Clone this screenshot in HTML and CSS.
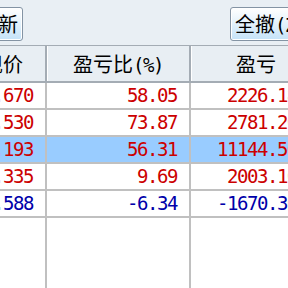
FILE: index.html
```html
<!DOCTYPE html>
<html lang="zh-CN">
<head>
    <meta charset="UTF-8">
    <title>持仓</title>
    <link rel="stylesheet" href="styles.css">
</head>
<body>

    <div class="toolbar">
        <button class="tool-btn btn-refresh">刷新</button>
        <button class="tool-btn btn-cancel">全撤<span class="half">(Z)</span></button>
    </div>

    <div class="grid-head">
        <div class="head-cell">现价</div>
        <div class="head-cell">盈亏比<span class="half">(%)</span></div>
        <div class="head-cell">盈亏</div>
    </div>

    <div class="grid-body">
        <div class="cell up">12.670</div>
        <div class="cell up">58.05</div>
        <div class="cell up last">2226.18</div>

        <div class="cell up">10.530</div>
        <div class="cell up">73.87</div>
        <div class="cell up last">2781.20</div>

        <div class="cell up selected">25.193</div>
        <div class="cell up selected">56.31</div>
        <div class="cell up selected last">11144.56</div>

        <div class="cell up">12.335</div>
        <div class="cell up">9.69</div>
        <div class="cell up last">2003.10</div>

        <div class="cell down">12.588</div>
        <div class="cell down">-6.34</div>
        <div class="cell down last">-1670.30</div>

        <!-- empty space under the last position -->
        <div class="filler"></div>
        <div class="filler"></div>
        <div class="filler"></div>
    </div>

</body>
</html>
```

FILE: styles.css
```css
body {
    margin: 0;
    padding: 0;
    width: 288px;
    height: 288px;
    overflow: hidden;
    background-color: #ffffff;
    font-family: "Noto Sans CJK SC", sans-serif;
}

.half {
    font-family: "DejaVu Sans Mono", monospace;
    font-size: 19px;
    letter-spacing: -1.44px;
}

/* Toolbar with the action buttons */
.toolbar {
    height: 45px;
    background-color: #e9eff4;
    display: flex;
    justify-content: space-between;
    align-items: flex-start;
    padding-top: 7px;
    box-sizing: border-box;
}

.tool-btn {
    height: 34px;
    padding: 0 4px;
    border: 1px solid #8494a4;
    border-radius: 3px;
    box-shadow: inset 0 0 0 1px #ffffff;
    background: linear-gradient(to bottom, #ffffff 0%, #e6f3fc 45%, #c4e2f8 100%);
    font-family: "Noto Sans CJK SC", sans-serif;
    font-size: 20px;
    line-height: 30px;
    color: #000000;
    white-space: nowrap;
}

.btn-refresh {
    margin-left: -27px;
}

.btn-cancel {
    margin-right: -22px;
}

/* Column headers */
.grid-head {
    display: grid;
    grid-template-columns: 84px 142px 130px;
    column-gap: 2px;
    margin-left: -39px;
    width: 360px;
    background-color: #a4acb4;
    border-top: 1px solid #a4acb4;
    border-bottom: 2px solid #a4acb4;
}

.head-cell {
    height: 35px;
    background-color: #e8eef3;
    box-shadow: inset 1px 0 0 #ffffff;
    font-size: 20px;
    line-height: 35px;
    text-align: center;
    white-space: nowrap;
    color: #000000;
}

/* Rows */
.grid-body {
    display: grid;
    grid-template-columns: 84px 142px 130px;
    grid-template-rows: repeat(5, 25px) 100px;
    gap: 2px;
    margin-left: -39px;
    width: 360px;
    background-color: #c0c0c0;
}

.cell {
    background-color: #ffffff;
    font-family: "DejaVu Sans Mono", monospace;
    font-size: 19px;
    letter-spacing: -1.44px;
    line-height: 25px;
    text-align: right;
    padding-right: 12px;
    white-space: nowrap;
}

.cell.last {
    padding-right: 24px;
}

.cell.selected {
    background-color: #99ccff;
}

.up {
    color: #cc0000;
}

.down {
    color: #0000aa;
}

.filler {
    background-color: #ffffff;
}
```
